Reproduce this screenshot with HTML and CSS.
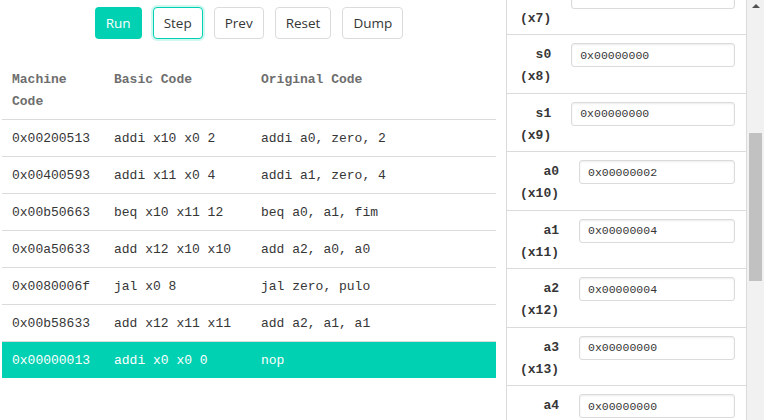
FILE: index.html
```html
<!DOCTYPE html>
<html>
<head>
<meta charset="utf-8">
<link rel="stylesheet" href="styles.css">
</head>
<body>
<div class="app">
  <section class="left">
    <div class="toolbar">
      <button class="btn btn-primary">Run</button>
      <button class="btn btn-focus">Step</button>
      <button class="btn">Prev</button>
      <button class="btn">Reset</button>
      <button class="btn">Dump</button>
    </div>
    <table class="code">
      <thead>
        <tr><th class="c1">Machine Code</th><th class="c2">Basic Code</th><th class="c3">Original Code</th></tr>
      </thead>
      <tbody>
        <tr><td>0x00200513</td><td>addi x10 x0 2</td><td>addi a0, zero, 2</td></tr>
        <tr><td>0x00400593</td><td>addi x11 x0 4</td><td>addi a1, zero, 4</td></tr>
        <tr><td>0x00b50663</td><td>beq x10 x11 12</td><td>beq a0, a1, fim</td></tr>
        <tr><td>0x00a50633</td><td>add x12 x10 x10</td><td>add a2, a0, a0</td></tr>
        <tr><td>0x0080006f</td><td>jal x0 8</td><td>jal zero, pulo</td></tr>
        <tr><td>0x00b58633</td><td>add x12 x11 x11</td><td>add a2, a1, a1</td></tr>
        <tr class="current"><td>0x00000013</td><td>addi x0 x0 0</td><td>nop</td></tr>
      </tbody>
    </table>
  </section>
  <aside class="right">
    <div class="reg-view">
      <div class="reg-list">
        <div class="reg"><div class="reg-name">t2 (x7)</div><input class="reg-val" value="0x00000000"></div>
        <div class="reg"><div class="reg-name">s0 (x8)</div><input class="reg-val" value="0x00000000"></div>
        <div class="reg"><div class="reg-name">s1 (x9)</div><input class="reg-val" value="0x00000000"></div>
        <div class="reg"><div class="reg-name">a0 (x10)</div><input class="reg-val" value="0x00000002"></div>
        <div class="reg"><div class="reg-name">a1 (x11)</div><input class="reg-val" value="0x00000004"></div>
        <div class="reg"><div class="reg-name">a2 (x12)</div><input class="reg-val" value="0x00000004"></div>
        <div class="reg"><div class="reg-name">a3 (x13)</div><input class="reg-val" value="0x00000000"></div>
        <div class="reg"><div class="reg-name">a4 (x14)</div><input class="reg-val" value="0x00000000"></div>
      </div>
    </div>
    <div class="scrollbar">
      <div class="sb-arrow"></div>
      <div class="sb-thumb"></div>
    </div>
  </aside>
</div>
</body>
</html>
```
FILE: styles.css
```css
html, body {
  margin: 0;
  padding: 0;
  background: #fff;
  overflow: hidden;
}
body {
  width: 771px;
  height: 420px;
  font-family: "Liberation Mono", "Courier New", monospace;
  color: #363636;
}
.app {
  display: flex;
  height: 420px;
}
.left {
  width: 494px;
  margin-left: 2px;
}
.toolbar {
  display: flex;
  justify-content: center;
  gap: 11px;
  padding-top: 7px;
  height: 32px;
  margin-bottom: 22px;
}
.btn {
  height: 32px;
  padding: 0 10px;
  border: 1px solid #dbdbdb;
  border-radius: 4px;
  background: #fff;
  color: #363636;
  font-family: "Open Sans", "Noto Sans", sans-serif;
  font-size: 13.5px;
  line-height: 30px;
  cursor: pointer;
}
.btn-primary {
  background: #00d1b2;
  border-color: transparent;
  color: #fff;
}
.btn-focus {
  border-color: #00d1b2;
  box-shadow: 0 0 0 2px rgba(0, 209, 178, 0.18);
}
.code {
  width: 494px;
  border-collapse: collapse;
  table-layout: fixed;
  font-size: 13px;
  line-height: 22px;
}
.code th {
  text-align: left;
  font-weight: bold;
  color: #6e6e6e;
  padding: 8px 10px 6px;
  border-bottom: 1px solid #dbdbdb;
  vertical-align: top;
}
.code .c1 { width: 82px; }
.code .c2 { width: 127px; }
.code td {
  padding: 8px 10px 6px;
  border-top: 1px solid #dbdbdb;
  white-space: nowrap;
  color: #363636;
}
.code thead + tbody tr:first-child td {
  border-top: none;
}
.code tr.current td {
  background: #00d1b2;
  color: #fff;
}
.right {
  display: flex;
  margin-left: 10px;
  height: 420px;
}
.reg-view {
  width: 241px;
  height: 420px;
  overflow: hidden;
  box-sizing: border-box;
  border-left: 1px solid #dbdbdb;
  border-right: 1px solid #dbdbdb;
}
.reg-list {
  margin-top: -23.5px;
}
.reg {
  display: flex;
  align-items: flex-start;
  padding: 8px 11px 5.5px 13px;
  border-bottom: 1px solid #dbdbdb;
}
.reg-name {
  width: min-content;
  text-align: right;
  font-weight: bold;
  font-size: 13px;
  line-height: 22px;
  color: #363636;
  margin-right: 20px;
  padding-top: 1px;
  margin-bottom: -1px;
}
.reg-val {
  flex: 1;
  min-width: 0;
  height: 24px;
  box-sizing: border-box;
  border: 1px solid #dbdbdb;
  border-radius: 3px;
  box-shadow: inset 0 1px 2px rgba(10, 10, 10, 0.08);
  padding: 0 8px;
  font-family: "Liberation Mono", "Courier New", monospace;
  font-size: 11.5px;
  color: #363636;
  background: #fff;
}
.scrollbar {
  width: 17px;
  height: 420px;
  background: #f1f1f1;
  position: relative;
}
.sb-arrow {
  position: absolute;
  left: 5px;
  top: 4px;
  width: 0;
  height: 0;
  border-left: 4px solid transparent;
  border-right: 4px solid transparent;
  border-bottom: 4px solid #505050;
}
.sb-thumb {
  position: absolute;
  left: 2px;
  top: 133px;
  width: 13px;
  height: 148px;
  background: #c1c1c1;
}
```
